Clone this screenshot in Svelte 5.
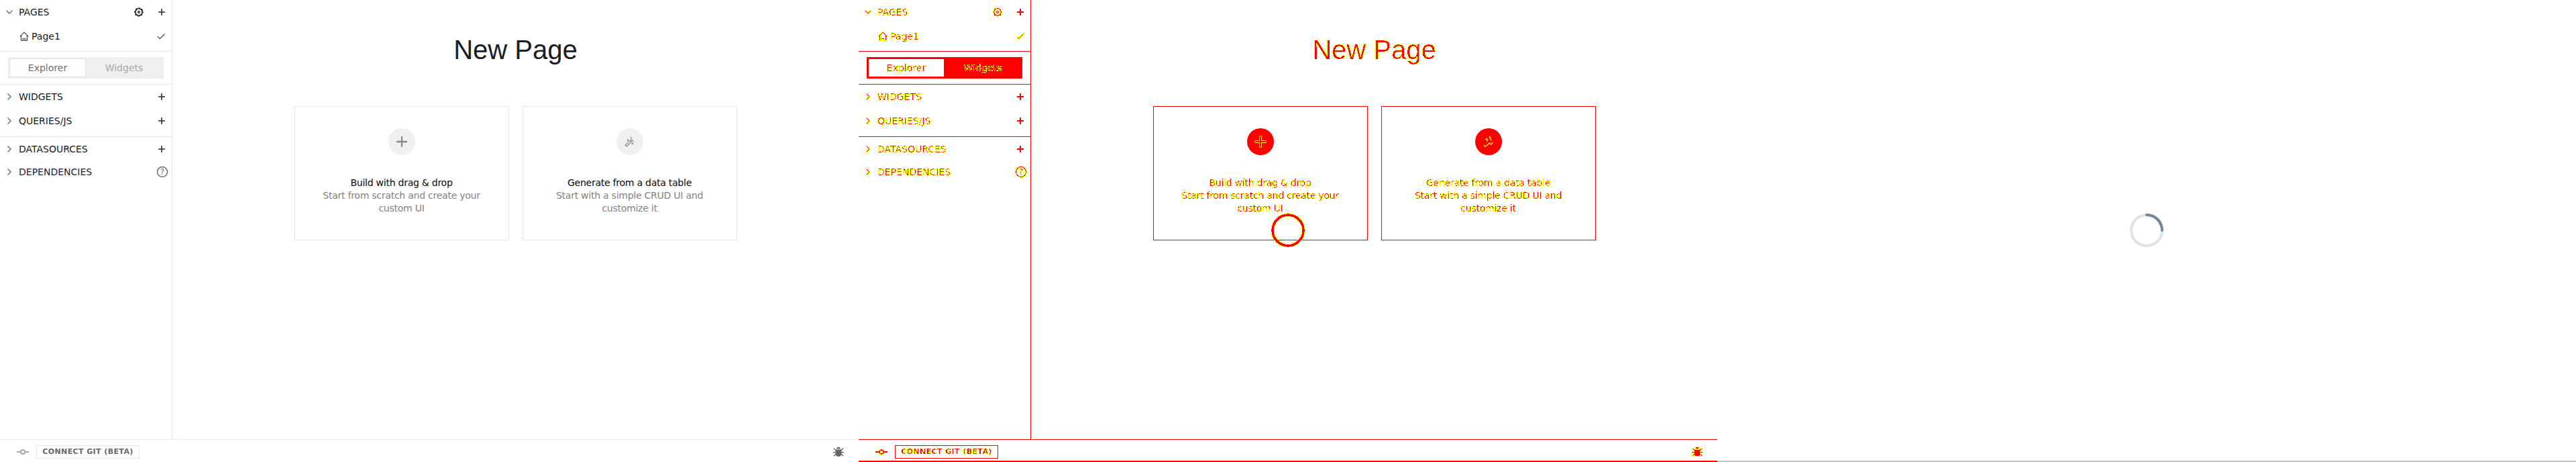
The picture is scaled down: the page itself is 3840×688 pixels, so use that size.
<script>
  const groups = [
    { cls: 'queries', rows: [{ name: 'WIDGETS' }, { name: 'QUERIES/JS' }] },
    { cls: 'sources', rows: [{ name: 'DATASOURCES' }, { name: 'DEPENDENCIES', help: true }] }
  ];
  const cards = [
    { icon: 'plus', title: 'Build with drag & drop', text: 'Start from scratch and create your custom UI' },
    { icon: 'wand', title: 'Generate from a data table', text: 'Start with a simple CRUD UI and customize it' }
  ];
</script>

{#snippet chevron(open)}
  <svg class="chev ink" class:open width="12" height="12" viewBox="0 0 12 12"><path d="M3.6 1.6 8 6 3.6 10.4" fill="none" stroke="#858282" stroke-width="1.7" /></svg>
{/snippet}

{#snippet plus()}
  <svg class="plus ink" width="10" height="10" viewBox="0 0 10 10"><path d="M5 0v10M0 5h10" stroke="#2b2b2b" stroke-width="1.6" /></svg>
{/snippet}

{#snippet screen(diff)}
  <section class="screen" class:diff>
    <div class="body">
      <aside>
        <div class="pages">
          <div class="row">
            {@render chevron(true)}
            <span class="label ink">PAGES</span>
            <svg class="gear ink" width="14" height="14" viewBox="0 0 14 14" fill="none" stroke="#191919">
              <circle cx="7" cy="7" r="5.2" stroke-width="1.6" />
              <circle cx="7" cy="7" r="6.2" stroke-width="1.3" stroke-dasharray="2.4 2.47" stroke-dashoffset="1.2" />
              <circle cx="7" cy="7" r="1.4" stroke-width="1.3" />
            </svg>
            {@render plus()}
          </div>
          <div class="row page">
            <svg class="ink" width="14" height="14" viewBox="0 0 14 14" fill="none" stroke="#4b4848" stroke-width="1.3">
              <path d="M.7 7.4 7 1.1l6.3 6.3M2.5 6v7h9V6M4.6 10.6h4.8" />
            </svg>
            <span class="label ink">Page1</span>
            <svg class="ink check" width="12" height="9" viewBox="0 0 12 9"><path d="M.6 4.1 4.3 7.6 11.4.7" fill="none" stroke="#4b4848" stroke-width="1.3" /></svg>
          </div>
        </div>
        <div class="switch">
          <div class="tabs">
            <div class="tab active"><span class="ink">Explorer</span></div>
            <div class="tab"><span class="ink">Widgets</span></div>
          </div>
        </div>
        {#each groups as g}
          <div class={g.cls}>
            {#each g.rows as r}
              <div class="row">
                {@render chevron(false)}
                <span class="label ink" class:navy={r.help}>{r.name}</span>
                {#if r.help}
                  <svg class="help ink" width="18" height="18" viewBox="0 0 18 18">
                    <circle cx="9" cy="9" r="7.5" fill="none" stroke="#716e6e" stroke-width="1.5" />
                    <text x="9" y="13.2" text-anchor="middle" font-size="12" fill="#716e6e">?</text>
                  </svg>
                {:else}
                  {@render plus()}
                {/if}
              </div>
            {/each}
          </div>
        {/each}
      </aside>
      <main>
        <h1 class="ink">New Page</h1>
        <div class="cards">
          {#each cards as c}
            <div class="card">
              <div class="disc">
                {#if c.icon === 'plus'}
                  <svg width="20" height="20" viewBox="0 0 20 20" stroke-linecap="round">
                    {#if diff}
                      <path d="M10 3v14M3 10h14" stroke="#ff0" stroke-width="4" />
                      <path d="M10 3v14M3 10h14" stroke="red" stroke-width="2" />
                    {:else}
                      <path d="M10 3v14M3 10h14" stroke="#8a8787" stroke-width="2.3" />
                    {/if}
                  </svg>
                {:else if diff}
                  <svg width="20" height="20" viewBox="0 0 20 20">
                    <path d="M3 15.2 5 17.4 11.4 12l2.2 2.2 2.6-3.4M5.4 7.4l1.8-2 1.4 2.2-1.2 2M10.6 4.2l1.2-1.6 1.2 1.8-.6 1.2 2 2.4" fill="none" stroke="#ff0" stroke-width="1.3" />
                  </svg>
                {:else}
                  <svg width="20" height="20" viewBox="0 0 20 20">
                    <path d="m3.3 15.2 9-9 2 2-9 9zM10.4 8l2.1 2.1" fill="none" stroke="#858282" stroke-width="1.1" />
                    <path d="m7 5.8.7 1.4 1.4.7-1.4.7L7 10l-.7-1.4-1.4-.7 1.4-.7zM13.8 10.8l.6 1.4 1.4.6-1.4.6-.6 1.4-.6-1.4-1.4-.6 1.4-.6zM11.7 2.5l.5 1.1 1.1.5-1.1.5-.5 1.1-.5-1.1-1.1-.5 1.1-.5z" fill="#858282" />
                    <circle cx="15.7" cy="10.2" r=".6" fill="#858282" />
                  </svg>
                {/if}
              </div>
              <div class="title ink">{c.title}</div>
              <p class="ink">{c.text}</p>
            </div>
          {/each}
        </div>
      </main>
    </div>
    <footer>
      <svg class="ink" width="18" height="8" viewBox="0 0 18 8" fill="none" stroke="#a9a7a7" stroke-width="2"><circle cx="9" cy="4" r="3" /><path d="M0 4h5.5M12.5 4H18" /></svg>
      <div class="git"><span class="ink">CONNECT GIT (BETA)</span></div>
      <svg class="ink bug" width="16" height="16" viewBox="0 0 16 16">
        <path d="M5.2 3.6a2.8 2.8 0 0 1 5.6 0z" fill="#6a6767" />
        <path d="M3.4 4.5h9.2v6.3a4.6 4 0 0 1-9.2 0z" fill="#6a6767" />
        <path d="M.8 2.8 4 5.4M15.2 2.8 12 5.4M0 8.6h4M16 8.6h-4M.9 14 4 11.3M15.1 14 12 11.3" stroke="#6a6767" stroke-width="1.4" fill="none" />
      </svg>
    </footer>
    {#if diff}
      <svg class="ring ink" width="52" height="52" viewBox="0 0 52 52"><circle cx="26" cy="26" r="23" fill="none" stroke="red" stroke-width="4" /></svg>
    {/if}
  </section>
{/snippet}

<svg class="defs" width="0" height="0">
  <filter id="edges" x="-20%" y="-20%" width="140%" height="140%" color-interpolation-filters="sRGB">
    <feColorMatrix values="0 0 0 0 1  0 0 0 1 0  0 0 0 0 0  0 0 0 1 0" />
    <feComponentTransfer>
      <feFuncG type="discrete" tableValues="1 1 1 1 1 0" />
      <feFuncA type="discrete" tableValues="0 1 1 1 1 1 1 1 1 1 1 1 1 1" />
    </feComponentTransfer>
  </filter>
</svg>

<div class="strip">
  {@render screen(false)}
  {@render screen(true)}
  <section class="loading">
    <svg width="50" height="50" viewBox="0 0 50 50" fill="none" stroke-width="4" stroke-linecap="round">
      <circle cx="25" cy="25" r="23" stroke="#dfe2e7" />
      <path d="M25 2a23 23 0 0 1 23 23" stroke="#738694" />
    </svg>
  </section>
</div>

<style>
  :global(body) { background: #fff; }
  * { box-sizing: border-box; }
  svg { display: block; flex: none; }
  .defs { position: absolute; }
  .strip { display: grid; grid-template-columns: repeat(3, 1280px); height: 688px; font: 14px/19px "DejaVu Sans", sans-serif; color: #191919; overflow: hidden; }
  .screen { --line: #e7e7e7; --fill: #f0f0f0; position: relative; display: flex; flex-direction: column; height: 688px; background: #fff; }
  .diff { --line: red; --fill: red; border-bottom: 2px solid red; }
  .diff .ink { filter: url(#edges); }
  .diff .ink { overflow: visible; }
  .diff .plus path { stroke-width: 2; }
  .body { display: flex; height: 654px; }
  aside { width: 257px; border-right: 1px solid var(--line); }
  .row { display: flex; align-items: center; height: 36px; padding: 0 10px 0 8px; }
  .row .label { margin-left: 8px; }
  .row .plus { margin-left: auto; }
  .chev.open { transform: rotate(90deg); }
  .row .gear { margin-left: auto; }
  .row .gear + .plus { margin-left: 22px; }
  .pages { height: 77px; border-bottom: 1px solid var(--line); }
  .page { padding-left: 29px; }
  .row.page .label { margin-left: 4px; }
  .check { margin-left: auto; }
  .navy { color: #21213b; }
  .switch { height: 49px; padding: 8px 12px; border-bottom: 1px solid var(--line); }
  .tabs { display: grid; grid-template-columns: 114px 114px; height: 32px; padding: 2px; background: var(--fill); }
  .tab { display: flex; align-items: center; justify-content: center; color: #a9a7a7; }
  .tab.active { background: #fff; border: 1px solid #e0dede; color: #716e6e; }
  .diff .tab.active { border-color: red; }
  .queries { height: 78px; border-bottom: 1px solid var(--line); }
  .sources { padding-top: 1px; }
  .sources .row { height: 34px; }
  .row .help { margin: 0 -5px 0 auto; }
  main { flex: 1; display: flex; flex-direction: column; align-items: center; padding-top: 51px; }
  h1 { margin: 0; font: 400 40px/46px "Liberation Sans", sans-serif; color: #182026; }
  .cards { display: flex; gap: 20px; margin-top: 61px; }
  .card { display: flex; flex-direction: column; align-items: center; width: 320px; height: 200px; padding-top: 32px; border: 1px solid var(--line); letter-spacing: -.24px; text-align: center; }
  .disc { display: flex; align-items: center; justify-content: center; width: 40px; height: 40px; border-radius: 50%; background: var(--fill); }
  .title { margin-top: 32px; color: #090707; }
  .card p { width: 256px; margin: 0; color: #858282; }
  footer { display: flex; align-items: center; height: 34px; padding: 2px 22px 0 25px; border-top: 1px solid var(--line); flex: none; }
  .diff footer { margin-bottom: -2px; }
  .git { display: flex; align-items: center; justify-content: center; width: 154px; height: 20px; margin-left: 11px; border: 1px solid var(--line); font-size: 11px; font-weight: 700; letter-spacing: .4px; color: #6a6767; white-space: nowrap; }
  .bug { margin-left: auto; }
  .ring { position: absolute; left: 614px; top: 317px; }
  .loading { display: flex; align-items: center; justify-content: center; height: 688px; background: #fff; border-bottom: 2px solid #c0c0c0; }
</style>
